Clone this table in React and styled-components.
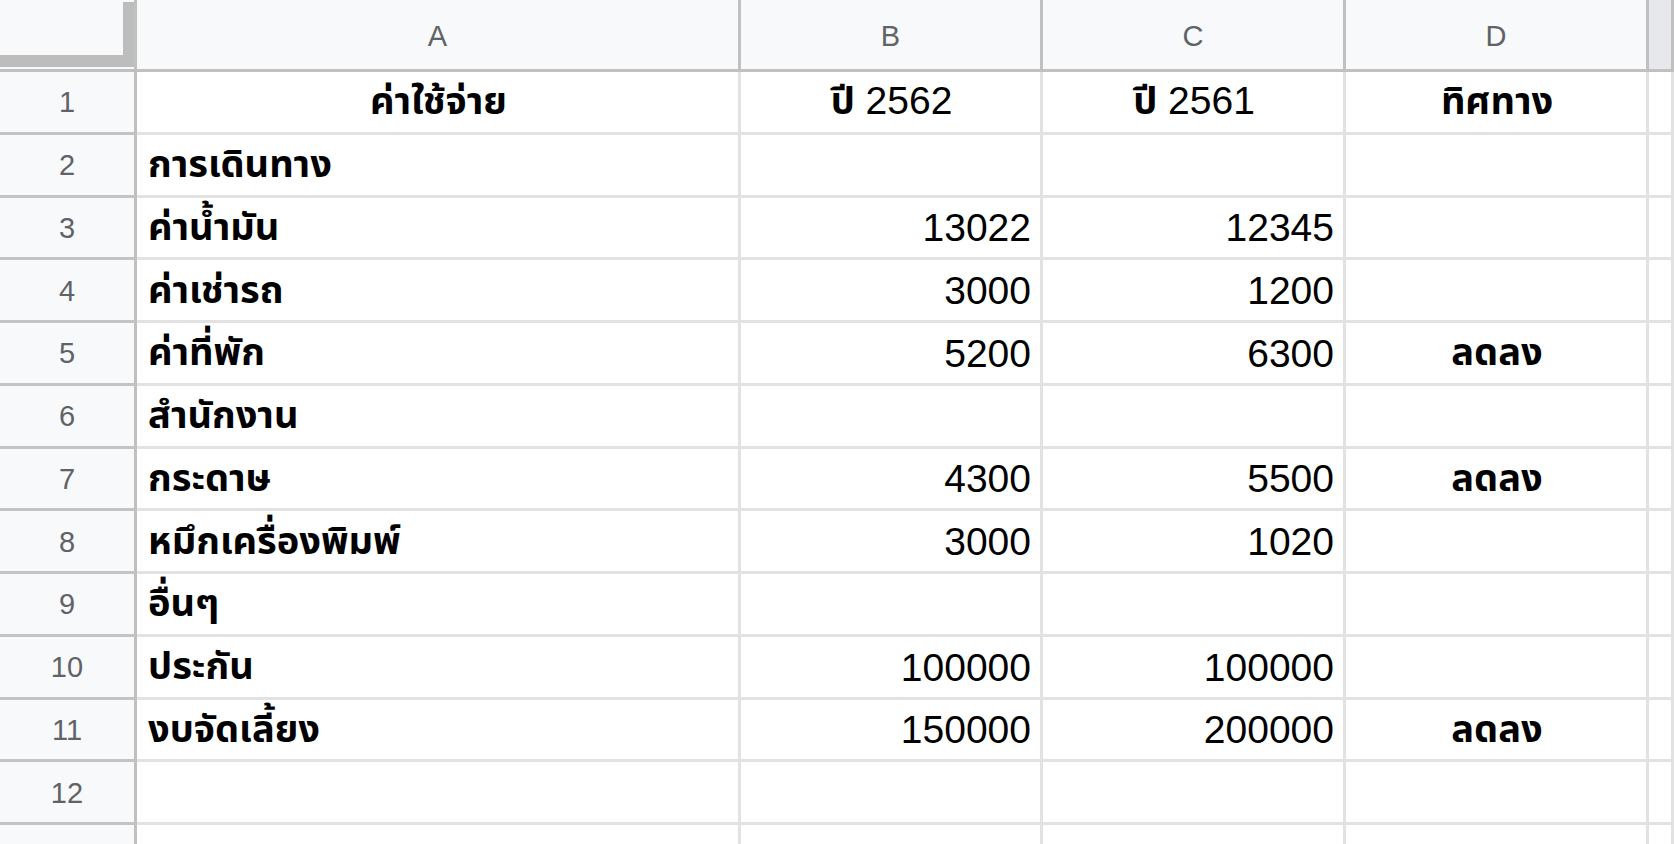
import React from "react";
import styled, { createGlobalStyle } from "styled-components";

const GlobalStyle = createGlobalStyle`
  html, body {
    margin: 0;
    padding: 0;
    background: #fff;
    overflow: hidden;
  }
  * {
    box-sizing: border-box;
  }
`;

const Sheet = styled.div`
  display: grid;
  grid-template-columns: 137px 604px 302px 303px 303px 1fr;
  grid-template-rows: 72px;
  grid-auto-rows: 62.75px;
  width: 1674px;
  height: 844px;
  overflow: hidden;
  font-family: "Liberation Sans", Arial, "Noto Sans Thai", "Noto Sans", sans-serif;
  color: #000;
`;

const Corner = styled.div`
  background: #f8f9fa;
  border-right: 3px solid #c0c0c0;
  border-bottom: 3px solid #c0c0c0;
  display: flex;
  padding: 2px 0 2px 0;

  .box {
    flex: 1;
    border-right: 11px solid #bdbdbd;
    border-bottom: 12px solid #bdbdbd;
  }
`;

const ColHead = styled.div`
  background: ${(p) => (p.$dim ? "#e6e8eb" : "#f8f9fa")};
  border-right: 3px solid #c0c0c0;
  border-bottom: 3px solid #c0c0c0;
  display: flex;
  align-items: center;
  justify-content: center;
  padding-top: 4px;
  font-size: 29px;
  color: #5f6368;
`;

const RowHead = styled.div`
  background: #f8f9fa;
  border-right: 3px solid #c0c0c0;
  border-bottom: 3px solid #c4c4c4;
  display: flex;
  align-items: center;
  justify-content: center;
  padding-top: 2px;
  font-size: 29px;
  color: #5f6368;
`;

const Cell = styled.div`
  border-right: 3px solid #e2e2e2;
  border-bottom: 3px solid #e2e2e2;
  display: flex;
  align-items: center;
  justify-content: ${(p) =>
    p.$align === "right" ? "flex-end" : p.$align === "center" ? "center" : "flex-start"};
  padding: 2px 9px 0 11px;
  font-size: 39px;
  white-space: pre;
  overflow: hidden;
`;

const Thai = styled.span`
  font-weight: 700;
  font-size: 38px;
`;

const rows = [
  ["ค่าใช้จ่าย", "ปี 2562", "ปี 2561", "ทิศทาง"],
  ["การเดินทาง", "", "", ""],
  ["ค่าน้ำมัน", "13022", "12345", ""],
  ["ค่าเช่ารถ", "3000", "1200", ""],
  ["ค่าที่พัก", "5200", "6300", "ลดลง"],
  ["สำนักงาน", "", "", ""],
  ["กระดาษ", "4300", "5500", "ลดลง"],
  ["หมึกเครื่องพิมพ์", "3000", "1020", ""],
  ["อื่นๆ", "", "", ""],
  ["ประกัน", "100000", "100000", ""],
  ["งบจัดเลี้ยง", "150000", "200000", "ลดลง"],
  ["", "", "", ""],
  ["", "", "", ""],
];

// split mixed text so thai runs get the heavier weight
function Text({ value }) {
  const parts = value.split(/([\u0E00-\u0E7F]+)/).filter(Boolean);
  return (
    <span>
      {parts.map((part, i) =>
        /[\u0E00-\u0E7F]/.test(part) ? <Thai key={i}>{part}</Thai> : part
      )}
    </span>
  );
}

export default function App() {
  return (
    <>
      <GlobalStyle />
      <Sheet>
        <Corner>
          <div className="box" />
        </Corner>
        {["A", "B", "C", "D"].map((l) => (
          <ColHead key={l}>{l}</ColHead>
        ))}
        <ColHead $dim />
        {rows.map((row, r) => (
          <React.Fragment key={r}>
            <RowHead>{r < 12 ? r + 1 : ""}</RowHead>
            {row.map((value, c) => {
              let align = "left";
              if (r === 0) align = "center";
              else if (c === 1 || c === 2) align = "right";
              else if (c === 3) align = "center";
              return (
                <Cell key={c} $align={align}>
                  <Text value={value} />
                </Cell>
              );
            })}
            <Cell />
          </React.Fragment>
        ))}
      </Sheet>
    </>
  );
}
